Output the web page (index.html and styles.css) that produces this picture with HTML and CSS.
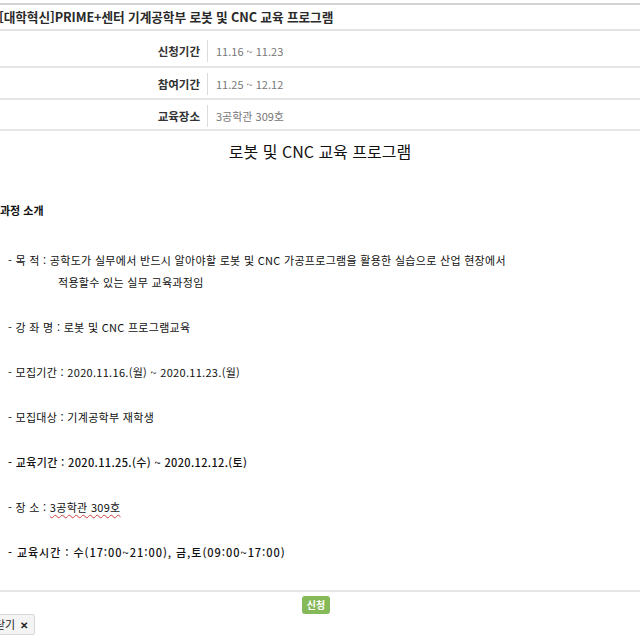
FILE: index.html
```html
<!DOCTYPE html>
<html lang="ko">
<head>
<meta charset="utf-8">
<link rel="stylesheet" href="styles.css">
</head>
<body>
<div class="page">
  <div class="title">[대학혁신]PRIME+센터 기계공학부 로봇 및 CNC 교육 프로그램</div>
  <div class="info">
    <div class="row first"><div class="label">신청기간</div><div class="value">11.16 ~ 11.23</div></div>
    <div class="row second"><div class="label">참여기간</div><div class="value">11.25 ~ 12.12</div></div>
    <div class="row third"><div class="label">교육장소</div><div class="value">3공학관 309호</div></div>
  </div>
  <div class="content">
    <h2 class="heading">로봇 및 CNC 교육 프로그램</h2>
    <p class="section">과정 소개</p>
    <p class="item">- 목 적 : 공학도가 실무에서 반드시 알아야할 로봇 및 CNC 가공프로그램을 활용한 실습으로 산업 현장에서<br><span class="indent">적용할수 있는 실무 교육과정임</span></p>
    <p class="item">- 강 좌 명 : 로봇 및 CNC 프로그램교육</p>
    <p class="item">- 모집기간 : 2020.11.16.(월) ~ 2020.11.23.(월)</p>
    <p class="item">- 모집대상 : 기계공학부 재학생</p>
    <p class="item mid">- 교육기간 : 2020.11.25.(수) ~ 2020.12.12.(토)</p>
    <p class="item">- 장 소 : <span class="place">3공학관 309호</span></p>
    <p class="item wide">- 교육시간 : 수(17:00~21:00), 금,토(09:00~17:00)</p>
  </div>
  <div class="actions">
    <button class="apply">신청</button>
  </div>
  <button class="close">닫기 <span class="x">✕</span></button>
</div>
</body>
</html>
```
FILE: styles.css
```css
html, body {
  margin: 0;
  padding: 0;
  background: #fff;
}
body {
  font-family: "Noto Sans CJK KR", "Noto Sans", sans-serif;
  color: #222;
}
.page {
  position: relative;
  width: 640px;
  height: 640px;
  overflow: hidden;
  padding-top: 3px;
  box-sizing: border-box;
}
.title {
  box-sizing: border-box;
  border-top: 2px solid #d4d4d4;
  border-bottom: 2px solid #e2e2e2;
  height: 28px;
  line-height: 24px;
  font-size: 12.7px;
  letter-spacing: -0.1px;
  font-weight: 700;
  color: #2a2a2a;
  white-space: nowrap;
  margin-left: -1px;
}
.row {
  box-sizing: border-box;
  display: flex;
  align-items: center;
  border-bottom: 2px solid #e6e6e6;
}
.row.first {
  height: 37px;
  padding-top: 5px;
}
.row.second {
  height: 32px;
  padding-top: 2px;
}
.row.third {
  height: 31px;
  padding-top: 2px;
}
.label {
  width: 200px;
  text-align: right;
  font-size: 11.5px;
  font-weight: 700;
  color: #333;
}
.value {
  margin-left: 7px;
  border-left: 1px solid #dcdcdc;
  padding-left: 8px;
  height: 22px;
  line-height: 22px;
  font-size: 11px;
  color: #777;
}
.heading {
  margin: 8px 0 0;
  text-align: center;
  font-size: 16px;
  font-weight: 400;
  line-height: 24px;
  color: #111;
}
.section {
  margin: 37px 0 0;
  font-size: 11px;
  font-weight: 700;
  line-height: 20px;
  color: #111;
}
.item {
  margin: 27px 0 0 8px;
  font-size: 11px;
  line-height: 22.5px;
  letter-spacing: 0.3px;
  color: #111;
}
.section + .item {
  margin-top: 28.5px;
}
.item + .item {
  margin-top: 22.5px;
}
.item.mid {
  font-weight: 500;
  letter-spacing: 0.35px;
}
.item.wide {
  font-weight: 500;
  letter-spacing: 0.95px;
}
.indent {
  padding-left: 50px;
}
.place {
  text-decoration: underline wavy #d04040;
  text-decoration-thickness: 1px;
  text-underline-offset: 2px;
}
.actions {
  position: absolute;
  left: 0;
  right: 0;
  top: 590px;
  border-top: 2px solid #e6e6e6;
  display: flex;
  justify-content: center;
  padding-top: 4px;
}
.apply {
  margin-left: -8px;
  background: #86b957;
  border: none;
  border-radius: 3px;
  color: #fff;
  font-family: inherit;
  font-size: 10px;
  font-weight: 700;
  height: 18px;
  line-height: 18px;
  padding: 0 5px;
}
.close {
  position: absolute;
  left: -10px;
  top: 614px;
  height: 21px;
  padding: 0 6px 0 4px;
  background: #f4f4f4;
  border: 1px solid #d8d8d8;
  border-radius: 2px;
  font-family: inherit;
  font-size: 11px;
  color: #222;
  line-height: 19px;
}
.x {
  font-weight: 700;
  font-size: 10px;
  margin-left: 2px;
}
```
